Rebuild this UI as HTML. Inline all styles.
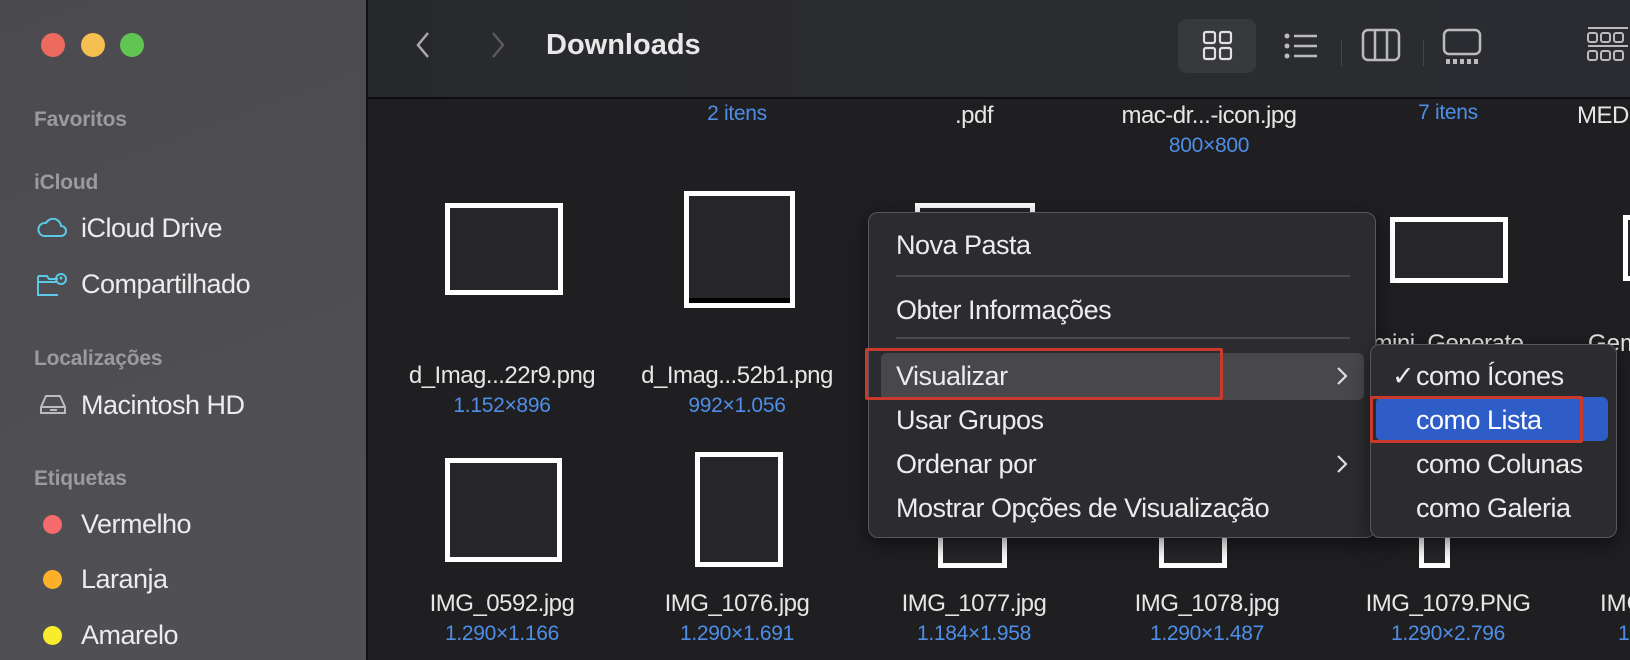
<!DOCTYPE html>
<html><head><meta charset="utf-8"><style>
*{margin:0;padding:0;box-sizing:border-box}
body{width:1630px;height:660px;overflow:hidden;background:#1f1f22;font-family:"Liberation Sans",sans-serif;position:relative}
.a{position:absolute;white-space:nowrap}
.side{left:0;top:0;width:368px;height:660px;background:linear-gradient(160deg,#4b4b4f,#4f4f53 60%,#505054);border-right:2px solid #111;}
.dot{position:absolute;width:24px;height:24px;border-radius:50%;top:33px}
.hd{color:#9b9b9f;font-size:21px;font-weight:bold;left:34px;line-height:24px;letter-spacing:-0.2px}
.si{color:#ececec;font-size:27px;left:81px;line-height:30px;letter-spacing:-0.5px}
.tag{position:absolute;left:43px;width:19px;height:19px;border-radius:50%}
.tb{left:368px;top:0;width:1262px;height:99px;background:linear-gradient(90deg,#28292d,#2b2c30 60%,#2a2c31);border-bottom:2px solid #0e0e10}
.lbl{color:#e6e6e6;font-size:24px;line-height:26px;transform:translateX(-50%);letter-spacing:-0.5px}
.dim{color:#4e8ee6;font-size:21px;line-height:22px;transform:translateX(-50%);letter-spacing:-0.3px}
.th{position:absolute;border:5px solid #fff;background:#26262a}
.menu{left:868px;top:212px;width:508px;height:326px;background:#2c2c30;border:1px solid #58585c;border-radius:10px;box-shadow:0 6px 20px rgba(0,0,0,.5)}
.mi{color:#ececec;font-size:27px;line-height:30px;letter-spacing:-0.5px}
.sep{position:absolute;height:2px;background:#4a4a4e}
</style></head><body>
<div class="a side"></div>
<div class="dot" style="left:41px;background:#ed6a5e"></div>
<div class="dot" style="left:81px;background:#f5bf4f"></div>
<div class="dot" style="left:120px;background:#61c554"></div>
<div class="a hd" style="top:108px">Favoritos</div>
<div class="a hd" style="top:171px">iCloud</div>
<svg class="a" style="left:36px;top:214px" width="32" height="26" viewBox="0 0 32 26"><path d="M8 22h17a5 5 0 0 0 0-10 8 8 0 0 0-15-3 6.5 6.5 0 0 0-2 13z" fill="none" stroke="#5ac8e8" stroke-width="2"/></svg>
<div class="a si" style="top:213px">iCloud Drive</div>
<svg class="a" style="left:36px;top:270px" width="32" height="28" viewBox="0 0 32 28"><path d="M2 6v19h20M2 6h9l2 3h9M2 12h18" fill="none" stroke="#5ac8e8" stroke-width="2"/><circle cx="25" cy="9" r="5" fill="none" stroke="#5ac8e8" stroke-width="2"/><circle cx="25" cy="8" r="1.5" fill="#5ac8e8"/></svg>
<div class="a si" style="top:269px">Compartilhado</div>
<div class="a hd" style="top:347px">Localizações</div>
<svg class="a" style="left:38px;top:393px" width="30" height="24" viewBox="0 0 30 24"><path d="M3 14l5-11h14l5 11v6H3z M3 14h24" fill="none" stroke="#bbb" stroke-width="2"/><path d="M12 17h7" stroke="#bbb" stroke-width="2"/></svg>
<div class="a si" style="top:390px">Macintosh HD</div>
<div class="a hd" style="top:467px">Etiquetas</div>
<div class="tag" style="top:515px;background:#f56a6a"></div><div class="a si" style="top:509px">Vermelho</div>
<div class="tag" style="top:570px;background:#fdb02a"></div><div class="a si" style="top:564px">Laranja</div>
<div class="tag" style="top:626px;background:#f8ec2c"></div><div class="a si" style="top:620px">Amarelo</div>

<div class="a tb"></div>
<svg class="a" style="left:414px;top:30px" width="20" height="30"><path d="M14 3L4 15l10 12" fill="none" stroke="#aaa" stroke-width="2.5"/></svg>
<svg class="a" style="left:488px;top:30px" width="20" height="30"><path d="M5 3l10 12L5 27" fill="none" stroke="#5a5a5e" stroke-width="2.5"/></svg>
<div class="a" style="left:546px;top:28px;color:#e8e8e8;font-size:29px;font-weight:bold;line-height:34px">Downloads</div>
<div class="a" style="left:1178px;top:19px;width:78px;height:54px;background:#38393d;border-radius:9px"></div>
<svg class="a" style="left:1202px;top:30px" width="32" height="32"><g fill="none" stroke="#e0e0e0" stroke-width="2.2"><rect x="2" y="2" width="11" height="11" rx="2"/><rect x="18" y="2" width="11" height="11" rx="2"/><rect x="2" y="18" width="11" height="11" rx="2"/><rect x="18" y="18" width="11" height="11" rx="2"/></g></svg>
<svg class="a" style="left:1283px;top:31px" width="36" height="30"><g fill="#bbb"><circle cx="4" cy="5" r="2.5"/><circle cx="4" cy="15" r="2.5"/><circle cx="4" cy="25" r="2.5"/></g><g stroke="#bbb" stroke-width="2.5"><path d="M11 5h23M11 15h23M11 25h23"/></g></svg>
<div class="a" style="left:1341px;top:40px;width:1px;height:26px;background:#444"></div>
<svg class="a" style="left:1361px;top:28px" width="40" height="36"><rect x="2" y="2" width="36" height="30" rx="5" fill="none" stroke="#bbb" stroke-width="2.5"/><path d="M14 2v30M26 2v30" stroke="#bbb" stroke-width="2.5"/></svg>
<div class="a" style="left:1423px;top:40px;width:1px;height:26px;background:#444"></div>
<svg class="a" style="left:1442px;top:28px" width="40" height="38"><rect x="2" y="2" width="36" height="24" rx="5" fill="none" stroke="#bbb" stroke-width="2.5"/><g fill="#bbb"><rect x="4" y="31" width="4" height="5"/><rect x="11" y="31" width="4" height="5"/><rect x="18" y="31" width="4" height="5"/><rect x="25" y="31" width="4" height="5"/><rect x="32" y="31" width="4" height="5"/></g></svg>
<svg class="a" style="left:1586px;top:26px" width="44" height="40"><g fill="none" stroke="#bbb" stroke-width="2"><path d="M2 2h40M2 20h40"/><rect x="2" y="7" width="9" height="9" rx="2"/><rect x="15" y="7" width="9" height="9" rx="2"/><rect x="28" y="7" width="9" height="9" rx="2"/><rect x="2" y="25" width="9" height="9" rx="2"/><rect x="15" y="25" width="9" height="9" rx="2"/><rect x="28" y="25" width="9" height="9" rx="2"/></g></svg>

<!-- row 1 labels -->
<div class="a dim" style="left:737px;top:103px">2 itens</div>
<div class="a lbl" style="left:974px;top:103px">.pdf</div>
<div class="a lbl" style="left:1209px;top:103px">mac-dr...-icon.jpg</div>
<div class="a dim" style="left:1209px;top:135px">800×800</div>
<div class="a dim" style="left:1448px;top:102px">7 itens</div>
<div class="a" style="left:1577px;top:103px;color:#e6e6e6;font-size:24px;line-height:26px;letter-spacing:-0.5px">MED</div>

<!-- row 2 -->
<div class="th" style="left:445px;top:203px;width:118px;height:92px"></div>
<div class="th" style="left:684px;top:191px;width:111px;height:117px"></div>
<div class="a" style="left:689px;top:298px;width:101px;height:5px;background:#000"></div>
<div class="th" style="left:915px;top:203px;width:120px;height:30px"></div>
<div class="th" style="left:1390px;top:217px;width:118px;height:66px"></div>
<div class="th" style="left:1623px;top:215px;width:20px;height:66px"></div>
<div class="a lbl" style="left:502px;top:363px">d_Imag...22r9.png</div>
<div class="a dim" style="left:502px;top:395px">1.152×896</div>
<div class="a lbl" style="left:737px;top:363px">d_Imag...52b1.png</div>
<div class="a dim" style="left:737px;top:395px">992×1.056</div>
<div class="a lbl" style="left:1448px;top:331px">mini_Generate</div>
<div class="a" style="left:1588px;top:331px;color:#e6e6e6;font-size:24px;line-height:26px">Gem</div>

<!-- row 3 -->
<div class="th" style="left:445px;top:458px;width:117px;height:104px"></div>
<div class="th" style="left:695px;top:452px;width:88px;height:115px"></div>
<div class="th" style="left:938px;top:520px;width:69px;height:48px"></div>
<div class="th" style="left:1159px;top:520px;width:68px;height:48px"></div>
<div class="th" style="left:1419px;top:520px;width:31px;height:48px"></div>
<div class="a lbl" style="left:502px;top:591px">IMG_0592.jpg</div><div class="a dim" style="left:502px;top:623px">1.290×1.166</div>
<div class="a lbl" style="left:737px;top:591px">IMG_1076.jpg</div><div class="a dim" style="left:737px;top:623px">1.290×1.691</div>
<div class="a lbl" style="left:974px;top:591px">IMG_1077.jpg</div><div class="a dim" style="left:974px;top:623px">1.184×1.958</div>
<div class="a lbl" style="left:1207px;top:591px">IMG_1078.jpg</div><div class="a dim" style="left:1207px;top:623px">1.290×1.487</div>
<div class="a lbl" style="left:1448px;top:591px">IMG_1079.PNG</div><div class="a dim" style="left:1448px;top:623px">1.290×2.796</div>
<div class="a" style="left:1600px;top:591px;color:#e6e6e6;font-size:24px;line-height:26px">IMG</div>
<div class="a" style="left:1618px;top:623px;color:#4e8ee6;font-size:21px;line-height:22px">1</div>

<!-- context menu -->
<div class="a menu"></div>
<div class="a mi" style="left:896px;top:230px">Nova Pasta</div>
<div class="sep" style="left:896px;top:275px;width:454px"></div>
<div class="a mi" style="left:896px;top:295px">Obter Informações</div>
<div class="sep" style="left:896px;top:337px;width:454px"></div>
<div class="a" style="left:881px;top:353px;width:483px;height:47px;background:#48484c;border-radius:6px"></div>
<div class="a" style="left:865px;top:348px;width:358px;height:52px;border:3px solid #c93a2c;border-radius:2px"></div>
<div class="a mi" style="left:896px;top:361px">Visualizar</div>
<svg class="a" style="left:1335px;top:366px" width="14" height="20"><path d="M3 2l8 8-8 8" fill="none" stroke="#ddd" stroke-width="2.2"/></svg>
<div class="a mi" style="left:896px;top:405px">Usar Grupos</div>
<div class="a mi" style="left:896px;top:449px">Ordenar por</div>
<svg class="a" style="left:1335px;top:454px" width="14" height="20"><path d="M3 2l8 8-8 8" fill="none" stroke="#ddd" stroke-width="2.2"/></svg>
<div class="a mi" style="left:896px;top:493px">Mostrar Opções de Visualização</div>

<!-- submenu -->
<div class="a" style="left:1370px;top:344px;width:247px;height:194px;background:#2c2c30;border:1px solid #58585c;border-radius:10px;box-shadow:0 6px 20px rgba(0,0,0,.5)"></div>
<div class="a mi" style="left:1392px;top:361px">✓</div>
<div class="a mi" style="left:1416px;top:361px">como Ícones</div>
<div class="a" style="left:1376px;top:397px;width:232px;height:44px;background:#2f5dc8;border-radius:6px"></div>
<div class="a" style="left:1370px;top:396px;width:213px;height:47px;border:3px solid #c93a2c;border-radius:2px"></div>
<div class="a mi" style="left:1416px;top:405px;color:#fff">como Lista</div>
<div class="a mi" style="left:1416px;top:449px">como Colunas</div>
<div class="a mi" style="left:1416px;top:493px">como Galeria</div>
</body></html>
